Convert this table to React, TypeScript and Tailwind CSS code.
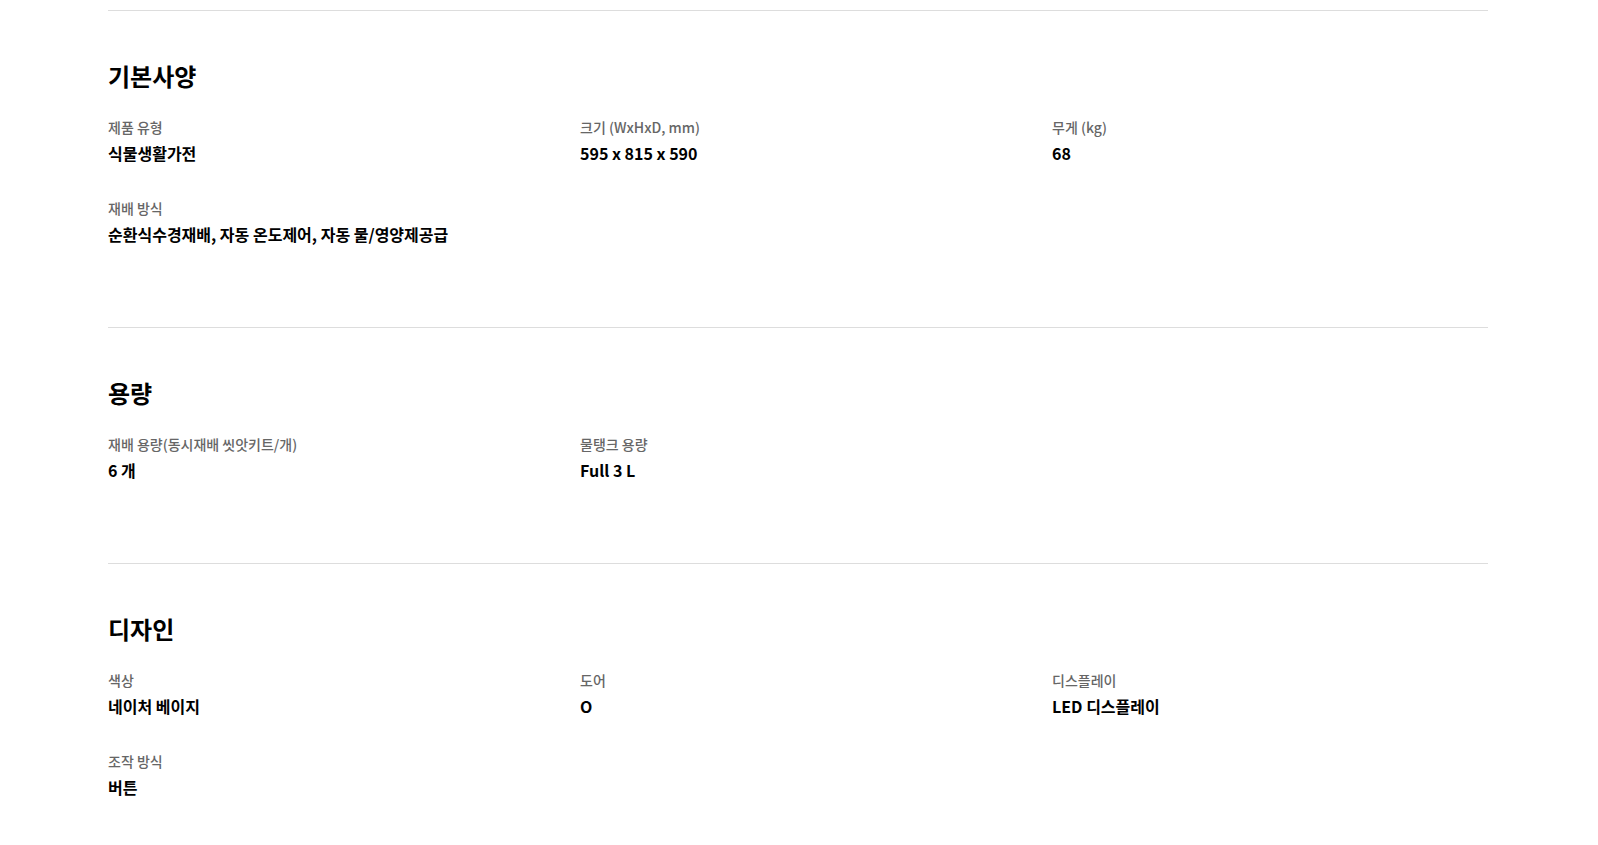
const sections = [
  {
    title: "기본사양",
    specs: [
      { label: "제품 유형", value: "식물생활가전" },
      { label: "크기 (WxHxD, mm)", value: "595 x 815 x 590" },
      { label: "무게 (kg)", value: "68" },
      { label: "재배 방식", value: "순환식수경재배, 자동 온도제어, 자동 물/영양제공급" },
    ],
  },
  {
    title: "용량",
    specs: [
      { label: "재배 용량(동시재배 씻앗키트/개)", value: "6 개" },
      { label: "물탱크 용량", value: "Full 3 L" },
    ],
  },
  {
    title: "디자인",
    specs: [
      { label: "색상", value: "네이처 베이지" },
      { label: "도어", value: "O" },
      { label: "디스플레이", value: "LED 디스플레이" },
      { label: "조작 방식", value: "버튼" },
    ],
  },
];

export default function App() {
  return (
    <div className="min-h-screen bg-white pt-[10px] font-['Noto_Sans_CJK_KR','Noto_Sans',sans-serif]">
      <div className="ml-[108px] w-[1380px]">
        {sections.map((section) => (
          <section key={section.title} className="border-t border-[#dddddd] pt-[49px] pb-[81px]">
            <h2 className="text-[24px] leading-[32px] font-bold text-black">{section.title}</h2>

            {/* spec grid */}
            <dl className="mt-[25px] grid grid-cols-3 gap-x-9 gap-y-[33px]">
              {section.specs.map((spec) => (
                <div key={spec.label}>
                  <dt className="text-[14px] leading-[20px] font-medium text-[#666666]">{spec.label}</dt>
                  <dd className="mt-[4px] text-[16px] leading-[24px] font-bold text-black">{spec.value}</dd>
                </div>
              ))}
            </dl>
          </section>
        ))}
      </div>
    </div>
  );
}
